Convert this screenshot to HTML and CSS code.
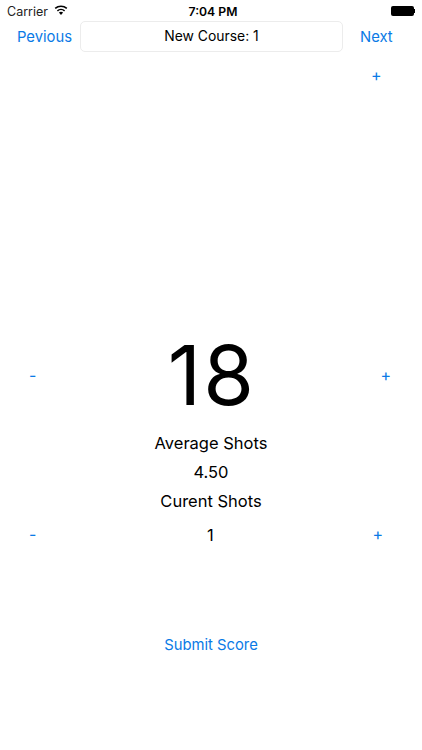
FILE: index.html
```html
<!DOCTYPE html>
<html lang="en">
<head>
    <meta charset="UTF-8">
    <title>Score</title>
    <link rel="stylesheet" href="styles.css">
</head>
<body>
    <div class="status">
        <div class="status-left">
            <span>Carrier</span>
            <svg class="wifi" width="14" height="10" viewBox="0 0 14 10">
                <path d="M7 10 4.9 7.6a3.2 3.2 0 0 1 4.2 0z" fill="#000"/>
                <path d="M3.4 5.9a5.4 5.4 0 0 1 7.2 0" fill="none" stroke="#000" stroke-width="1.5"/>
                <path d="M1.2 3.4a8.6 8.6 0 0 1 11.6 0" fill="none" stroke="#000" stroke-width="1.5"/>
            </svg>
        </div>
        <div class="status-time">7:04 PM</div>
        <div class="battery"><div class="battery-body"></div><div class="battery-tip"></div></div>
    </div>

    <div class="nav">
        <a class="link nav-prev">Pevious</a>
        <div class="course">New Course: 1</div>
        <a class="link nav-next">Next</a>
    </div>

    <div class="top-plus"><a class="link small">+</a></div>

    <div class="hole">
        <a class="link small minus">-</a>
        <div class="big">18</div>
        <a class="link small plus">+</a>
    </div>

    <div class="label label-avg">Average Shots</div>
    <div class="label label-val">4.50</div>
    <div class="label label-cur">Curent Shots</div>

    <div class="shots">
        <a class="link small minus">-</a>
        <div class="shots-val">1</div>
        <a class="link small plus">+</a>
    </div>

    <div class="submit"><a class="link">Submit Score</a></div>
</body>
</html>
```
FILE: styles.css
```css
* { margin: 0; padding: 0; box-sizing: border-box; }
body {
    width: 422px;
    height: 750px;
    background: #fff;
    color: #000;
    font-family: Inter, "Liberation Sans", sans-serif;
    overflow: hidden;
}
.link { color: #0a7ae6; font-size: 14.8px; }
.small { font-size: 16px; line-height: 20px; padding-bottom: 2px; }

.status {
    height: 20px;
    padding: 2px 7px 0 7px;
    display: flex;
    align-items: center;
    justify-content: space-between;
    font-size: 12.5px;
    position: relative;
}
.status-left { display: flex; align-items: center; gap: 6px; color: #222; }
.wifi { margin-top: -3px; }
.status-time {
    position: absolute;
    left: 4px;
    right: 0;
    text-align: center;
    font-weight: 600;
    font-size: 12.2px;
}
.battery { display: flex; align-items: center; }
.battery-body { width: 23px; height: 10px; background: #000; border-radius: 2px; }
.battery-tip { width: 1.5px; height: 4px; background: #000; }

.nav {
    height: 32px;
    display: flex;
    align-items: center;
}
.nav-prev { width: 79px; padding: 2px 0 0 17px; white-space: nowrap; }
.course {
    width: 263px;
    height: 31px;
    margin-left: 1px;
    border: 1px solid #ececec;
    border-radius: 5px;
    display: flex;
    align-items: center;
    justify-content: center;
    font-size: 13.9px;
}
.nav-next { margin-left: 17px; padding-top: 2px; }

.top-plus {
    height: 20px;
    margin-top: 14px;
    padding-left: 371px;
    display: flex;
    align-items: center;
}

.hole {
    height: 80px;
    margin-top: 250px;
    display: flex;
    align-items: center;
    justify-content: space-between;
    padding: 0 31px 0 29px;
}
.big {
    font-size: 82px;
    font-weight: 380;
    line-height: 80px;
    letter-spacing: 2px;
    padding-left: 7px;
}

.label { text-align: center; font-size: 16.5px; line-height: 20px; }
.label-avg { margin-top: 17px; }
.label-val { margin-top: 9px; }
.label-cur { margin-top: 9px; }

.shots {
    height: 20px;
    margin-top: 14px;
    display: flex;
    align-items: center;
    justify-content: space-between;
    padding: 0 39px 0 29px;
}
.shots-val { font-size: 16.5px; padding-left: 12px; }

.submit { margin-top: 89px; text-align: center; line-height: 20px; }
```
